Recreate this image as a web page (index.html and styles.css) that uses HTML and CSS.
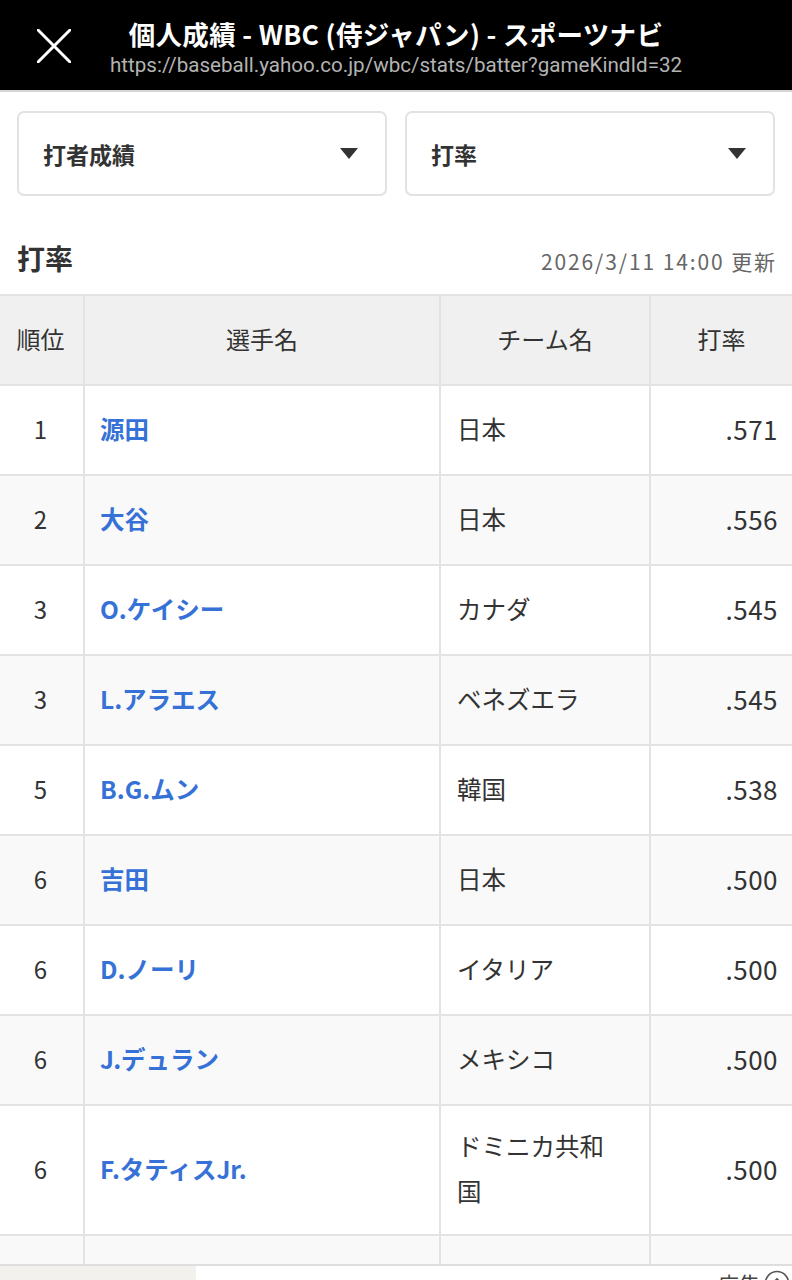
FILE: index.html
```html
<!DOCTYPE html>
<html lang="ja">
<head>
<meta charset="utf-8">
<title>個人成績 - WBC (侍ジャパン) - スポーツナビ</title>
<link rel="stylesheet" href="styles.css">
</head>
<body>
<header class="topbar">
  <div class="close">
    <svg width="34" height="34" viewBox="0 0 34 34"><path d="M1 1 L33 33 M33 1 L1 33" stroke="#fff" stroke-width="3" fill="none" stroke-linecap="round"/></svg>
  </div>
  <div class="titles">
    <div class="page-title">個人成績 - WBC (侍ジャパン) - スポーツナビ</div>
    <div class="page-url">https://baseball.yahoo.co.jp/wbc/stats/batter?gameKindId=32</div>
  </div>
  <div></div>
</header>

<section class="filters">
  <div class="select"><span>打者成績</span><span class="tri"></span></div>
  <div class="select"><span>打率</span><span class="tri"></span></div>
</section>

<div class="title-row">
  <h2 class="heading">打率</h2>
  <span class="updated">2026/3/11 14:00 更新</span>
</div>

<div class="table">
  <div class="row head">
    <div class="c rank">順位</div>
    <div class="c name-h">選手名</div>
    <div class="c team-h">チーム名</div>
    <div class="c avg-h">打率</div>
  </div>
  <div class="row">
    <div class="c rank">1</div><div class="c name">源田</div><div class="c team">日本</div><div class="c avg">.571</div>
  </div>
  <div class="row alt">
    <div class="c rank">2</div><div class="c name">大谷</div><div class="c team">日本</div><div class="c avg">.556</div>
  </div>
  <div class="row">
    <div class="c rank">3</div><div class="c name">O.ケイシー</div><div class="c team">カナダ</div><div class="c avg">.545</div>
  </div>
  <div class="row alt">
    <div class="c rank">3</div><div class="c name">L.アラエス</div><div class="c team">ベネズエラ</div><div class="c avg">.545</div>
  </div>
  <div class="row">
    <div class="c rank">5</div><div class="c name">B.G.ムン</div><div class="c team">韓国</div><div class="c avg">.538</div>
  </div>
  <div class="row alt">
    <div class="c rank">6</div><div class="c name">吉田</div><div class="c team">日本</div><div class="c avg">.500</div>
  </div>
  <div class="row">
    <div class="c rank">6</div><div class="c name">D.ノーリ</div><div class="c team">イタリア</div><div class="c avg">.500</div>
  </div>
  <div class="row alt">
    <div class="c rank">6</div><div class="c name">J.デュラン</div><div class="c team">メキシコ</div><div class="c avg">.500</div>
  </div>
  <div class="row">
    <div class="c rank">6</div><div class="c name">F.タティスJr.</div><div class="c team two">ドミニカ共和国</div><div class="c avg">.500</div>
  </div>
  <div class="row alt">
    <div class="c rank"></div><div class="c name"></div><div class="c team"></div><div class="c avg"></div>
  </div>
</div>

<div class="ad">
  <div class="ad-left"></div>
  <div class="ad-right">
    <span class="ad-label">広告</span>
    <svg class="ad-icon" width="26" height="26" viewBox="0 0 26 26"><circle cx="13" cy="13" r="11.5" fill="none" stroke="#555" stroke-width="1.6"/><path d="M7 15 L13 9 L19 15" fill="none" stroke="#555" stroke-width="1.8"/></svg>
  </div>
</div>
</body>
</html>
```

FILE: styles.css
```css
* { box-sizing: border-box; }
html, body { margin: 0; padding: 0; }
body {
  width: 792px;
  background: #fff;
  color: #333;
  font-family: "Noto Sans CJK JP", "Noto Sans", sans-serif;
  overflow: hidden;
}

.topbar {
  height: 92px;
  background: #000;
  border-bottom: 2px solid #d6d6d6;
  display: grid;
  grid-template-columns: 1fr auto 1fr;
  align-items: center;
}
.close {
  display: flex;
  align-items: center;
  padding-left: 37px;
  padding-top: 2px;
}
.close svg { display: block; }
.titles {
  text-align: center;
  padding-top: 5px;
}
.page-title {
  color: #fff;
  font-weight: 700;
  font-size: 26.5px;
  line-height: 30px;
  letter-spacing: 0.3px;
}
.page-url {
  color: #b3b3b3;
  font-family: "Roboto", "Noto Sans CJK JP", sans-serif;
  font-size: 20.6px;
  line-height: 24px;
  margin-top: 4px;
}

.filters {
  display: grid;
  grid-template-columns: 1fr 1fr;
  gap: 18px;
  padding: 19px 17px 0;
}
.select {
  height: 85px;
  border: 2px solid #e2e2e2;
  border-radius: 7px;
  display: flex;
  align-items: center;
  justify-content: space-between;
  padding: 0 27px 0 24px;
  font-size: 23px;
  font-weight: 700;
  color: #333;
}
.tri {
  width: 0;
  height: 0;
  border-left: 9px solid transparent;
  border-right: 9px solid transparent;
  border-top: 11px solid #333;
}

.title-row {
  display: flex;
  justify-content: space-between;
  align-items: center;
  height: 98px;
  padding: 26px 17px 0;
}
.heading {
  margin: 0;
  font-size: 28px;
  font-weight: 700;
  color: #333;
  line-height: 40px;
}
.updated {
  font-size: 21px;
  letter-spacing: 1.9px;
  color: #666;
  padding-top: 6px;
  margin-right: -2px;
}

.table {
  border-top: 2px solid #e3e3e3;
}
.row {
  display: grid;
  grid-template-columns: 85px 356px 210px 1fr;
  border-bottom: 2px solid #e3e3e3;
  background: #fff;
}
.row.alt { background: #f9f9f9; }
.row.head { background: #f0f0f0; }
.c {
  min-height: 88px;
  display: flex;
  align-items: center;
  border-right: 2px solid #e3e3e3;
  font-size: 24px;
  line-height: 45px;
  color: #333;
  padding-bottom: 4px;
}
.c:last-child { border-right: none; }
.rank { justify-content: center; padding-right: 2px; }
.head .c { justify-content: center; color: #333; }
.name {
  padding-left: 15px;
  color: #3571d6;
  font-weight: 700;
  font-size: 24.5px;
}
.team { padding-left: 16px; padding-right: 18px; font-size: 24.5px; }
.team.two { padding-top: 17px; padding-bottom: 21px; padding-right: 34px; }
.avg {
  justify-content: flex-end;
  padding-right: 14px;
  font-size: 26px;
  letter-spacing: 0.5px;
}

.ad {
  position: fixed;
  left: 0;
  top: 1264px;
  width: 792px;
  height: 60px;
  border-top: 2px solid #dedede;
  display: flex;
  background: #fff;
}
.ad-left {
  width: 196px;
  background: #f2f1ee;
}
.ad-right {
  flex: 1;
  display: flex;
  justify-content: flex-end;
  align-items: flex-start;
  gap: 4px;
  padding: 4px 2px 0 0;
}
.ad-label {
  font-size: 21px;
  line-height: 26px;
  color: #444;
}
.ad-icon { display: block; margin-top: 0; }
```
